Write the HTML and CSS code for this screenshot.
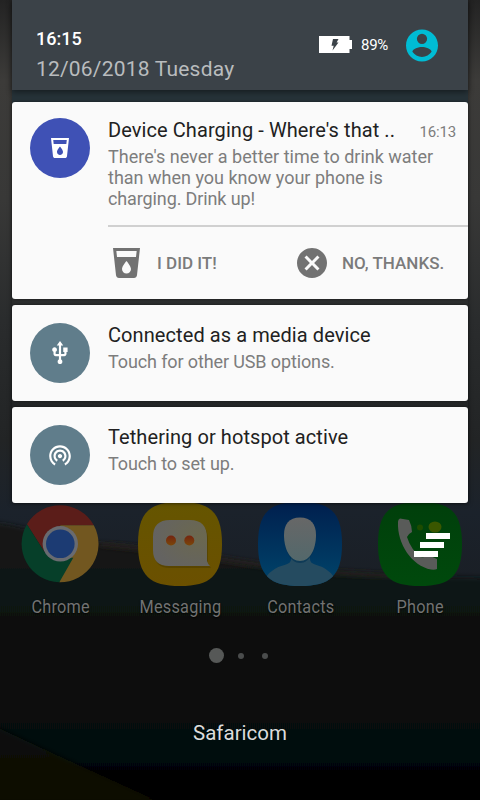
FILE: index.html
```html
<!DOCTYPE html>
<html lang="en">
<head>
<meta charset="utf-8">
<title>Notifications</title>
<link rel="stylesheet" href="styles.css">
</head>
<body>
<div class="screen">
  <svg class="wallpaper" viewBox="0 0 480 800" aria-hidden="true">
    <defs>
      <linearGradient id="sky" x1="0" y1="0" x2="0" y2="1">
        <stop offset="0" stop-color="#232323"/>
        <stop offset=".1" stop-color="#3c3b39"/>
        <stop offset=".25" stop-color="#383837"/>
        <stop offset=".4" stop-color="#2a2c2d"/>
        <stop offset=".55" stop-color="#222425"/>
        <stop offset=".64" stop-color="#1b222b"/>
        <stop offset=".72" stop-color="#1a1f26"/>
      </linearGradient>
      <linearGradient id="hill" gradientUnits="userSpaceOnUse" x1="0" y1="520" x2="0" y2="800">
        <stop offset="0" stop-color="#171a18"/>
        <stop offset=".22" stop-color="#101413"/>
        <stop offset=".55" stop-color="#090d0e"/>
        <stop offset="1" stop-color="#030404"/>
      </linearGradient>
      <linearGradient id="slope" x1="0" y1="0" x2="0" y2="1">
        <stop offset="0" stop-color="#0c0d09"/>
        <stop offset="1" stop-color="#0a0803"/>
      </linearGradient>
      <filter id="soft"><feGaussianBlur stdDeviation="2.5"/></filter>
    </defs>
    <rect width="480" height="800" fill="url(#sky)"/>
    <path d="M-10 522C30 526 60 540 100 543S180 552 240 562S380 575 490 578V810H-10Z" fill="url(#hill)" filter="url(#soft)"/>
    <path d="M100 544Q180 552 240 562T400 576" fill="none" stroke="#25221c" stroke-width="4" filter="url(#soft)"/>
    <path d="M-10 724L50 752L160 802H-10Z" fill="url(#slope)" filter="url(#soft)"/>
  </svg>

  <main class="home">
    <div class="dock">
      <div class="app">
        <svg class="app-icon" viewBox="-.3 .2 84 84">
          <path d="M8.600 22.500A38.500 38.500 0 0 1 75.500 23.500H42L26 50Z" fill="#5b1d19"/>
          <path d="M42 42V23.500H75.500A38.500 38.500 0 0 1 41 80.500Z" fill="#725720"/>
          <path d="M8.600 22.500L26.700 51L42 56H55L41 80.500A38.500 38.500 0 0 1 8.600 22.500Z" fill="#063f29"/>
          <circle cx="42" cy="42" r="17.700" fill="#696b70"/>
          <circle cx="42" cy="42" r="14.300" fill="#1c3b73"/>
        </svg>
        <span class="app-name">Chrome</span>
      </div>
      <div class="app">
        <svg class="app-icon" viewBox="0 0 84 84">
          <defs>
            <linearGradient id="yellow" x1="0" y1="0" x2="0" y2="1"><stop offset="0" stop-color="#655500"/><stop offset="1" stop-color="#6b5000"/></linearGradient>
            <radialGradient id="bubble" cx=".8" cy=".35" r=".8"><stop offset="0" stop-color="#6b684f"/><stop offset="1" stop-color="#646361"/></radialGradient>
            <linearGradient id="eye" x1="0" y1="0" x2="0" y2="1"><stop offset="0" stop-color="#742410"/><stop offset="1" stop-color="#7a4709"/></linearGradient>
          </defs>
          <path d="M42 0C72 0 84 10 84 42S72 84 42 84S0 74 0 42S12 0 42 0Z" fill="url(#yellow)"/>
          <path d="M32 18H52Q69 18 69 36V59Q70 62 72 64H31Q15 64 15 48V35Q15 18 32 18Z" fill="#493900" opacity=".5" transform="translate(1 2)"/>
          <path d="M32 18H52Q69 18 69 36V59Q70 62 72 64H31Q15 64 15 48V35Q15 18 32 18Z" fill="url(#bubble)"/>
          <circle cx="33" cy="38.500" r="5" fill="url(#eye)"/>
          <circle cx="51.300" cy="38.500" r="5" fill="url(#eye)"/>
        </svg>
        <span class="app-name">Messaging</span>
      </div>
      <div class="app">
        <svg class="app-icon" viewBox="0 0 84 84">
          <defs>
            <linearGradient id="blue" x1="0" y1="0" x2="0" y2="1"><stop offset="0" stop-color="#001f4e"/><stop offset="1" stop-color="#00456b"/></linearGradient>
            <linearGradient id="face" x1="0" y1="0" x2="0" y2="1"><stop offset="0" stop-color="#676767"/><stop offset="1" stop-color="#53686b"/></linearGradient>
            <clipPath id="tile"><path d="M42 0C72 0 84 10 84 42S72 84 42 84S0 74 0 42S12 0 42 0Z"/></clipPath>
          </defs>
          <g clip-path="url(#tile)">
            <rect width="84" height="84" fill="url(#blue)"/>
            <path d="M33 52H52V57Q52 61 57 62.500Q70 66 76 75V84H8V75Q14 66 28 62.500Q33 61 33 57Z" fill="#254b60"/>
            <path d="M42 17C53 17 58 25 58 34C58 48 52 61 42 61S26 48 26 34C26 25 31 17 42 17Z" fill="#003052" opacity=".6"/>
            <path d="M42 15.500C53 15.500 58 22 58 33C58 47 52 59 42 59S26 47 26 33C26 22 31 15.500 42 15.500Z" fill="url(#face)"/>
          </g>
        </svg>
        <span class="app-name">Contacts</span>
      </div>
      <div class="app">
        <svg class="app-icon" viewBox="0 0 84 84">
          <defs>
            <linearGradient id="green" x1="0" y1="0" x2="0" y2="1"><stop offset="0" stop-color="#003f0b"/><stop offset="1" stop-color="#00490c"/></linearGradient>
          </defs>
          <path d="M42 0C72 0 84 10 84 42S72 84 42 84S0 74 0 42S12 0 42 0Z" fill="url(#green)"/>
          <circle cx="42" cy="25.500" r="3" fill="#1d4c00"/>
          <ellipse cx="57" cy="25" rx="6.500" ry="5.500" fill="#3a5700"/>
          <path d="M22 16.500L31 18Q34 24 34 30Q30 32 29 35Q33 48 43 55Q47 56 50 53L59 57V67Q57 68 53 67.500C34 64 19 42 20 20Q20 17 22 16.500Z" fill="#595b59"/>
        </svg>
        <span class="app-name">Phone</span>
      </div>
    </div>
    <div class="pages"><i class="page current"></i><i class="page"></i><i class="page"></i></div>
    <div class="carrier">Safaricom</div>
  </main>

  <div class="shade">
    <header class="status">
      <div class="clock">
        <div class="time">16:15</div>
        <div class="date">12/06/2018 Tuesday</div>
      </div>
      <svg class="battery" viewBox="0 0 33 17"><path d="M0 0H30.500V4H33V13H30.500V17H0Z" fill="#fff"/><path d="M14 3H19.500L17.600 6.500H19.500L13.500 14.500L14.700 9.700H12.500Z" fill="#3b4248"/></svg>
      <span class="percent">89%</span>
      <svg class="user" viewBox="2 2 20 20"><path fill="#00bcd4" d="M12 2C6.480 2 2 6.480 2 12s4.480 10 10 10 10-4.480 10-10S17.520 2 12 2zm0 2.600a3.200 3.200 0 1 1 0 6.400 3.200 3.200 0 0 1 0-6.400zm0 14.600c-2.500 0-4.710-1.280-6-3.220.030-1.990 4-3.080 6-3.080 1.990 0 5.970 1.090 6 3.080-1.290 1.940-3.500 3.220-6 3.220z"/></svg>
    </header>
    <section class="cards">
      <article class="card first">
        <div class="badge indigo">
          <svg class="cup-small" viewBox="3 2 18 20"><path fill="#fff" d="M3 2l2.010 18.230C5.130 21.230 5.970 22 7 22h10c1.030 0 1.870-.77 1.990-1.770L21 2H3zm9 17c-1.660 0-3-1.340-3-3 0-2 3-5.400 3-5.400s3 3.400 3 5.400c0 1.660-1.340 3-3 3zm6.330-11H5.670l-.44-4h13.550l-.45 4z"/></svg>
        </div>
        <div class="content">
          <div class="headline"><h2>Device Charging - Where's that ..</h2><span class="when">16:13</span></div>
          <p>There's never a better time to drink water<br>than when you know your phone is<br><span class="snug">charging. Drink up!</span></p>
          <div class="actions">
            <div class="action">
              <svg class="cup" viewBox="3 2 18 20"><path fill="#727272" d="M3 2l2.010 18.230C5.130 21.230 5.970 22 7 22h10c1.030 0 1.870-.77 1.990-1.770L21 2H3zm9 17c-1.660 0-3-1.340-3-3 0-2 3-5.400 3-5.400s3 3.400 3 5.400c0 1.660-1.340 3-3 3zm6.330-11H5.670l-.44-4h13.550l-.45 4z"/></svg>
              <span>I DID IT!</span>
            </div>
            <div class="action dismiss">
              <svg class="cross" viewBox="2 2 20 20"><path fill="#727272" d="M12 2C6.470 2 2 6.470 2 12s4.470 10 10 10 10-4.470 10-10S17.530 2 12 2zm5 13.590L15.590 17 12 13.410 8.410 17 7 15.590 10.590 12 7 8.410 8.410 7 12 10.590 15.590 7 17 8.410 13.410 12 17 15.590z"/></svg>
              <span>NO, THANKS.</span>
            </div>
          </div>
        </div>
      </article>
      <article class="card">
        <div class="badge slate">
          <svg class="glyph" viewBox="0 0 24 24"><path fill="#fff" d="M15 7v4h1v2h-3V5h2l-3-4-3 4h2v8H8v-2.070c.7-.37 1.200-1.080 1.200-1.930 0-1.210-.99-2.200-2.200-2.200-1.210 0-2.200.99-2.200 2.200 0 .85.5 1.560 1.200 1.930V13c0 1.110.89 2 2 2h3v3.050c-.71.37-1.200 1.100-1.200 1.950 0 1.220.99 2.200 2.200 2.200 1.210 0 2.200-.98 2.200-2.200 0-.85-.49-1.580-1.200-1.950V15h3c1.110 0 2-.89 2-2v-2h1V7h-4z"/></svg>
        </div>
        <div class="content">
          <h2>Connected as a media device</h2>
          <p class="snug">Touch for other USB options.</p>
        </div>
      </article>
      <article class="card">
        <div class="badge slate">
          <svg class="glyph" viewBox="0 0 24 24"><path fill="#fff" d="M12 11c-1.100 0-2 .9-2 2s.9 2 2 2 2-.9 2-2-.9-2-2-2zm6 2c0-3.310-2.690-6-6-6s-6 2.690-6 6c0 2.220 1.210 4.150 3 5.190l1-1.740c-1.190-.7-2-1.970-2-3.450 0-2.210 1.790-4 4-4s4 1.790 4 4c0 1.480-.81 2.750-2 3.450l1 1.740c1.790-1.040 3-2.970 3-5.190zM12 3C6.480 3 2 7.480 2 13c0 3.700 2.010 6.920 4.990 8.650l1-1.730C5.610 18.530 4 15.960 4 13c0-4.420 3.580-8 8-8s8 3.580 8 8c0 2.960-1.610 5.530-4 6.920l1 1.730c2.990-1.730 5-4.950 5-8.650 0-5.520-4.480-10-10-10z"/></svg>
        </div>
        <div class="content">
          <h2>Tethering or hotspot active</h2>
          <p class="snug">Touch to set up.</p>
        </div>
      </article>
    </section>
  </div>

  <svg class="clear-all" viewBox="0 0 36 24"><path fill="#fff" d="M12 0H36V6H12ZM6 9H30V15H6ZM0 18H24V24H0Z"/></svg>
</div>
</body>
</html>
```
FILE: styles.css
```css
* { box-sizing: border-box; }
body { margin: 0; font-family: Roboto, "Liberation Sans", sans-serif; }
svg { display: block; flex: none; }
h2, p { margin: 0; font-weight: 400; }

.screen { position: relative; width: 480px; height: 800px; overflow: hidden; background: #111; }
.wallpaper { position: absolute; inset: 0; width: 480px; height: 800px; }

/* Dimmed launcher behind the shade */
.home { position: relative; height: 800px; padding-top: 502px; }
.dock { display: grid; grid-template-columns: repeat(4, 120px); }
.app { display: flex; flex-direction: column; align-items: center; }
.app-icon { width: 84px; height: 84px; }
.app-name {
  margin-top: 9px; font-size: 19px; line-height: 24px; letter-spacing: .3px;
  color: #727373; text-shadow: 0 1px 2px #000; transform: translateX(.5px) scaleX(.855); white-space: nowrap;
}
.pages { display: flex; align-items: center; height: 15px; margin-top: 29px; padding-left: 208.500px; }
.page { width: 6px; height: 6px; border-radius: 50%; background: #4a4c4c; margin-right: 18px; }
.page.current { width: 15px; height: 15px; margin-right: 14px; background: #565857; }
.carrier { margin-top: 58px; text-align: center; font-size: 20.500px; line-height: 24px; color: #dcdcdc; }

/* Notification shade */
.shade { position: absolute; top: 0; left: 12px; width: 456px; box-shadow: 0 0 5px rgba(0, 0, 0, .35); }
.status {
  position: relative; display: flex; height: 90px; padding: 28px 30px 0 24px;
  background: #3b4248; box-shadow: 0 2px 6px rgba(0, 0, 0, .45);
}
.clock { flex: 1; }
.time { font-size: 18px; line-height: 22px; font-weight: 500; color: #fff; }
.date { margin-top: 7px; font-size: 21px; line-height: 24px; letter-spacing: .2px; color: #b9bcbe; white-space: nowrap; }
.battery { width: 33px; height: 17px; margin-top: 8px; }
.percent { width: 28px; margin: 7px 17px 0 9px; font-size: 15px; line-height: 20px; letter-spacing: -.3px; color: #fff; }
.user { width: 32px; height: 33px; margin-top: 1px; }
.cards {
  display: flex; flex-direction: column; gap: 6px; padding-top: 12px;
  background: linear-gradient(#263238 102px, transparent 102px);
}
.card {
  display: flex; height: 96px; padding: 18px 0 0 18px; background: #fafafa;
  border-radius: 3px; box-shadow: 0 0 3px rgba(0, 0, 0, .5);
}
.first { height: 197px; padding-top: 16px; }
.badge { display: flex; flex: none; align-items: center; justify-content: center; width: 60px; height: 60px; border-radius: 50%; }
.indigo { background: #3f51b5; }
.slate { background: #607d8b; }
.cup-small { width: 18px; height: 20px; }
.glyph { width: 26px; height: 26px; }
.content { flex: 1; margin-left: 18px; }
.content h2 { font-size: 20px; line-height: 24px; letter-spacing: .08px; color: #212121; white-space: nowrap; }
.content p { margin-top: 4px; font-size: 18px; line-height: 21px; color: #7d7d7d; white-space: nowrap; }
.content .snug { letter-spacing: -.12px; }
.headline { display: flex; justify-content: space-between; align-items: baseline; padding-right: 12px; }
.when { font-size: 15px; letter-spacing: -.15px; color: #7d7d7d; }
.actions { display: flex; height: 74px; margin-top: 16px; border-top: 2px solid #d0d0d0; }
.action { display: flex; align-items: center; width: 185px; padding-left: 5px; font-size: 17px; font-weight: 500; color: #7b7b7b; white-space: nowrap; }
.action.dismiss { width: 175px; padding-left: 4px; }
.cup { width: 27px; height: 30px; margin-right: 17px; }
.cross { width: 30px; height: 30px; margin-right: 15px; }

.clear-all { position: absolute; left: 414px; top: 533px; width: 36px; height: 24px; }
```
